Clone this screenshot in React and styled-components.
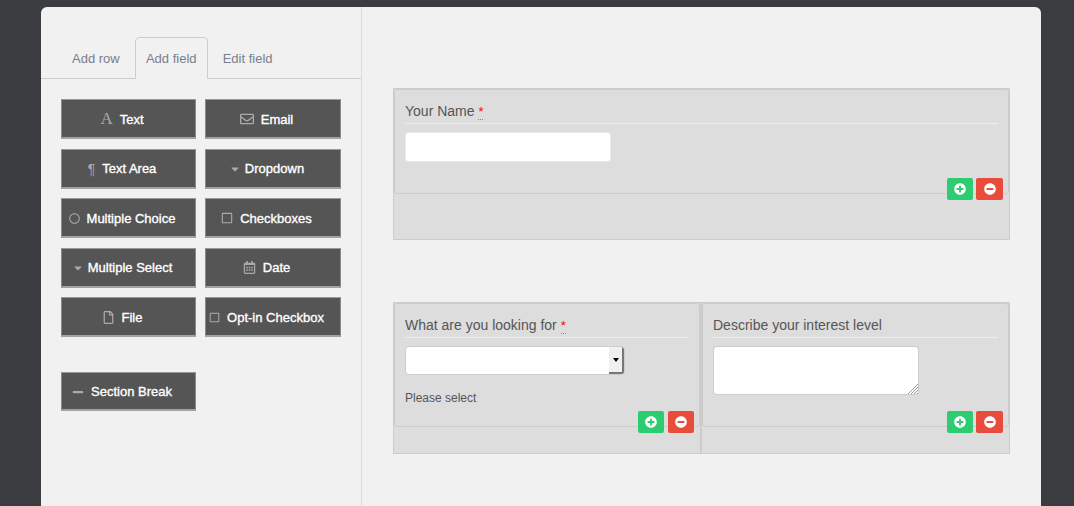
import React from "react";
import styled, { createGlobalStyle } from "styled-components";
import {
  FaRegEnvelope,
  FaCaretDown,
  FaRegCircle,
  FaRegSquare,
  FaRegCalendarAlt,
  FaRegFile,
  FaMinus,
  FaPlusCircle,
  FaMinusCircle,
} from "react-icons/fa";

const GlobalStyle = createGlobalStyle`
  html, body {
    margin: 0;
    height: 100%;
    overflow: hidden;
    background: #3b3c40;
    font-family: "Liberation Sans", Arial, sans-serif;
  }
  * { box-sizing: border-box; }
`;

const Panel = styled.div`
  width: 1000px;
  height: calc(100vh - 7px);
  margin: 7px 0 0 41px;
  display: flex;
  background: #f1f1f1;
  border-radius: 6px 6px 0 0;
`;

const Sidebar = styled.aside`
  width: 321px;
  flex: none;
  padding-top: 30px;
  border-right: 1px solid #ddd;
`;

const Tabs = styled.div`
  display: flex;
  height: 42px;
  padding-left: 20px;
  border-bottom: 1px solid #ccc;
`;

const Tab = styled.div`
  height: 42px;
  padding: 1px 10px 0;
  margin-right: 4px;
  display: flex;
  align-items: center;
  font-size: 13px;
  color: #7a7e8a;
  border: 1px solid ${(p) => (p.$active ? "#ccc" : "transparent")};
  border-bottom: 1px solid ${(p) => (p.$active ? "#f1f1f1" : "transparent")};
  border-radius: 5px 5px 0 0;
  ${(p) => p.$active && "width: 73px; justify-content: center;"}
`;

const FieldGrid = styled.div`
  display: grid;
  grid-template-columns: 135px 136px;
  grid-auto-rows: 40px;
  column-gap: 9px;
  row-gap: 9.5px;
  padding: 20px 0 0 20px;
`;

const SectionGrid = styled(FieldGrid)`
  grid-auto-rows: 39px;
  padding-top: 35px;
`;

const FieldButton = styled.button`
  display: flex;
  align-items: center;
  justify-content: center;
  gap: 7px;
  padding: 1px 13px 0 0;
  background: #555;
  border: 1px solid #999;
  border-bottom: 2px solid #a3a3a3;
  border-left-color: #8a8a8a;
  border-right-color: #8a8a8a;
  color: #fff;
  font-family: inherit;
  font-size: 13px;
  font-weight: normal;
  -webkit-text-stroke: 0.35px #fff;
  white-space: nowrap;
  svg {
    color: #aaa;
    flex: none;
  }
`;

const Caret = styled(FaCaretDown)`
  margin-right: -3px;
`;

const GlyphIcon = styled.span`
  font-family: ${(p) => (p.$serif ? '"Liberation Serif", serif' : '"Liberation Sans", sans-serif')};
  font-size: ${(p) => (p.$serif ? "17px" : "14px")};
  line-height: 16px;
  -webkit-text-stroke: 0;
  color: #aaa;
`;

const Canvas = styled.main`
  flex: 1;
  padding: 81px 31px 0 31px;
  display: flex;
  flex-direction: column;
  gap: 62px;
`;

const Row = styled.section`
  flex: none;
  height: 152px;
  width: 617px;
  display: flex;
  background: #ddd;
  border: 1px solid #ccc;
`;

const Column = styled.div`
  flex: 1;
  min-width: 0;
  & + & {
    flex: 0 0 309px;
    border-left: 2px solid #ccc;
  }
`;

const Field = styled.div`
  position: relative;
  height: ${(p) => p.$height}px;
  padding: 11px 10px 0;
  border: 1px solid #ccc;
  border-radius: 3px;
`;

const Label = styled.div`
  height: 23px;
  padding-top: 2px;
  font-size: 14px;
  line-height: 17px;
  color: #555;
  border-bottom: 1px solid #eee;
`;

const Required = styled.span`
  color: #f00;
  font-size: 13px;
  border-bottom: 1px dotted #888;
`;

const TextInput = styled.input`
  display: block;
  width: 206px;
  height: 30px;
  margin-top: 8px;
  background: #fff;
  border: 1px solid #e8e8e8;
  border-radius: 3px;
  outline: none;
`;

const SelectBox = styled.div`
  display: flex;
  justify-content: flex-end;
  width: 220px;
  height: 29px;
  margin-top: 8px;
  background: #fff;
  border: 1px solid #ccc;
  border-radius: 4px;
  overflow: hidden;
`;

const SelectCap = styled.div`
  width: 15px;
  display: flex;
  align-items: center;
  justify-content: center;
  background: #f0f0f0;
  border-right: 2px solid #777;
  border-bottom: 2px solid #777;
  &::after {
    content: "";
    border: 3.5px solid transparent;
    border-top: 4px solid #000;
    border-bottom: none;
  }
`;

const Hint = styled.div`
  margin-top: 16px;
  font-size: 12px;
  line-height: 15px;
  color: #555;
`;

const AreaWrap = styled.div`
  position: relative;
  width: 206px;
  height: 49px;
  margin-top: 8px;
`;

const TextArea = styled.textarea`
  display: block;
  width: 100%;
  height: 100%;
  background: #fff;
  border: 1px solid #ccc;
  border-radius: 4px;
  outline: none;
  resize: none;
`;

const ResizeGrip = styled.svg`
  position: absolute;
  right: 1px;
  bottom: 1px;
`;

const Actions = styled.div`
  position: absolute;
  right: 5px;
  bottom: -7px;
  display: flex;
  gap: ${(p) => (p.$split ? "4px" : "3px")};
`;

const ActionButton = styled.button`
  width: ${(p) => p.$width}px;
  height: 22px;
  display: flex;
  align-items: center;
  justify-content: center;
  padding: 0;
  border: none;
  border-radius: 2px;
  color: #fff;
  background: ${(p) => (p.$remove ? "#e74c3c" : "#2ecc71")};
`;

const fields = [
  { label: "Text", icon: <GlyphIcon $serif>A</GlyphIcon> },
  { label: "Email", icon: <FaRegEnvelope size={14} /> },
  { label: "Text Area", icon: <GlyphIcon>¶</GlyphIcon> },
  { label: "Dropdown", icon: <Caret size={12} /> },
  { label: "Multiple Choice", icon: <FaRegCircle size={11} /> },
  { label: "Checkboxes", icon: <FaRegSquare size={12} /> },
  { label: "Multiple Select", icon: <Caret size={12} /> },
  { label: "Date", icon: <FaRegCalendarAlt size={13} /> },
  { label: "File", icon: <FaRegFile size={13} /> },
  { label: "Opt-in Checkbox", icon: <FaRegSquare size={11} /> },
];

const RowActions = ({ split }) => (
  <Actions $split={split}>
    <ActionButton $width={26}>
      <FaPlusCircle size={12} />
    </ActionButton>
    <ActionButton $width={split ? 26 : 27} $remove>
      <FaMinusCircle size={12} />
    </ActionButton>
  </Actions>
);

const App = () => {
  return (
    <>
      <GlobalStyle />
      <Panel>
        <Sidebar>
          <Tabs>
            <Tab>Add row</Tab>
            <Tab $active>Add field</Tab>
            <Tab>Edit field</Tab>
          </Tabs>
          <FieldGrid>
            {fields.map((f) => (
              <FieldButton key={f.label}>
                {f.icon}
                {f.label}
              </FieldButton>
            ))}
          </FieldGrid>
          <SectionGrid>
            <FieldButton>
              <FaMinus size={12} />
              Section Break
            </FieldButton>
          </SectionGrid>
        </Sidebar>
        <Canvas>
          <Row>
            <Column>
              <Field $height={105}>
                <Label>
                  Your Name <Required>*</Required>
                </Label>
                <TextInput />
                <RowActions />
              </Field>
            </Column>
          </Row>
          <Row>
            <Column>
              <Field $height={124}>
                <Label>
                  What are you looking for <Required>*</Required>
                </Label>
                <SelectBox>
                  <SelectCap />
                </SelectBox>
                <Hint>Please select</Hint>
                <RowActions split />
              </Field>
            </Column>
            <Column>
              <Field $height={124}>
                <Label>Describe your interest level</Label>
                <AreaWrap>
                  <TextArea />
                  <ResizeGrip width="11" height="11" viewBox="0 0 11 11">
                    <path
                      d="M11 1 L1 11 M11 4 L4 11 M11 7 L7 11 M11 10 L10 11"
                      stroke="#999"
                      strokeWidth="1"
                    />
                  </ResizeGrip>
                </AreaWrap>
                <RowActions />
              </Field>
            </Column>
          </Row>
        </Canvas>
      </Panel>
    </>
  );
};

export default App;
